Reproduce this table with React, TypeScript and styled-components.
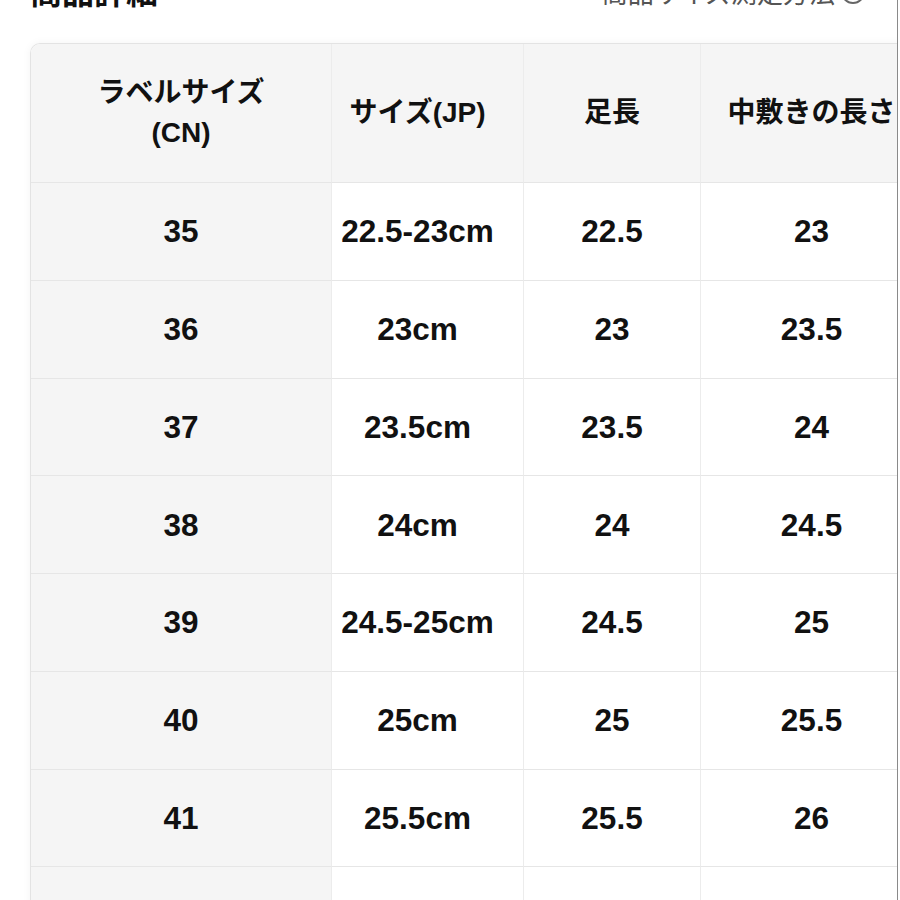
import { Fragment } from 'react';
import styled, { createGlobalStyle } from 'styled-components';

const GlobalStyle = createGlobalStyle`
  html, body {
    margin: 0;
    padding: 0;
    background: #fff;
    overflow: hidden;
  }
  body {
    font-family: "Liberation Sans", "Noto Sans CJK JP", sans-serif;
    color: #111;
  }
`;

const Frame = styled.div`
  width: 897px;
  height: 900px;
  overflow: hidden;
  border-right: 1px solid #8a8a8a;
  background: #fff;
`;

const TopBar = styled.div`
  display: flex;
  justify-content: space-between;
  align-items: flex-end;
  padding: 0 32px 0 30px;
  margin-top: -22px;
  height: 30px;
`;

const Title = styled.h1`
  margin: 0;
  font-size: 32px;
  line-height: 30px;
  font-weight: 700;
  color: #111;
`;

const GuideLink = styled.div`
  display: flex;
  align-items: flex-end;
  gap: 6px;
  font-size: 26px;
  line-height: 28px;
  color: #555;
`;

const HelpIcon = styled.span`
  width: 20px;
  height: 20px;
  border: 2px solid #666;
  border-radius: 50%;
  margin-bottom: 4px;
  display: inline-flex;
  align-items: center;
  justify-content: center;
  font-size: 14px;
  line-height: 1;
`;

const Card = styled.div`
  margin: 35px 0 0 30px;
  width: 892px;
  border: 1px solid #e3e3e3;
  border-bottom: none;
  border-radius: 10px 10px 0 0;
  overflow: hidden;
  box-shadow: 0 0 8px rgba(0, 0, 0, 0.05);
`;

const Grid = styled.div`
  display: grid;
  grid-template-columns: 301px 192px 177px 222px;
  grid-template-rows: 139px;
  grid-auto-rows: 97.75px;
`;

const Cell = styled.div<{ $shaded?: boolean; $head?: boolean; $shift?: boolean }>`
  display: flex;
  align-items: center;
  justify-content: center;
  text-align: center;
  background: ${p => (p.$shaded ? '#f5f5f5' : '#fff')};
  border-right: 1px solid #ececec;
  border-bottom: 1px solid #e6e6e6;
  padding-right: ${p => (p.$shift ? '20px' : '0')};
  font-size: ${p => (p.$head ? '28px' : '31.5px')};
  line-height: ${p => (p.$head ? '40px' : '36px')};
  font-weight: 700;
  color: #111;
  white-space: nowrap;
`;

const rows = [
  ['35', '22.5-23cm', '22.5', '23'],
  ['36', '23cm', '23', '23.5'],
  ['37', '23.5cm', '23.5', '24'],
  ['38', '24cm', '24', '24.5'],
  ['39', '24.5-25cm', '24.5', '25'],
  ['40', '25cm', '25', '25.5'],
  ['41', '25.5cm', '25.5', '26'],
  ['42', '26cm', '26', '26.5'],
];

export default function App() {
  return (
    <>
      <GlobalStyle />
      <Frame>
        <TopBar>
          <Title>商品詳細</Title>
          <GuideLink>
            商品サイズ測定方法
            <HelpIcon>?</HelpIcon>
          </GuideLink>
        </TopBar>
        <Card>
          <Grid>
            <Cell $shaded $head>
              ラベルサイズ
              <br />
              (CN)
            </Cell>
            <Cell $shaded $head $shift>サイズ(JP)</Cell>
            <Cell $shaded $head>足長</Cell>
            <Cell $shaded $head>中敷きの長さ</Cell>
            {rows.map(r => (
              <Fragment key={r[0]}>
                <Cell $shaded>{r[0]}</Cell>
                <Cell $shift>{r[1]}</Cell>
                <Cell>{r[2]}</Cell>
                <Cell>{r[3]}</Cell>
              </Fragment>
            ))}
          </Grid>
        </Card>
      </Frame>
    </>
  );
}
